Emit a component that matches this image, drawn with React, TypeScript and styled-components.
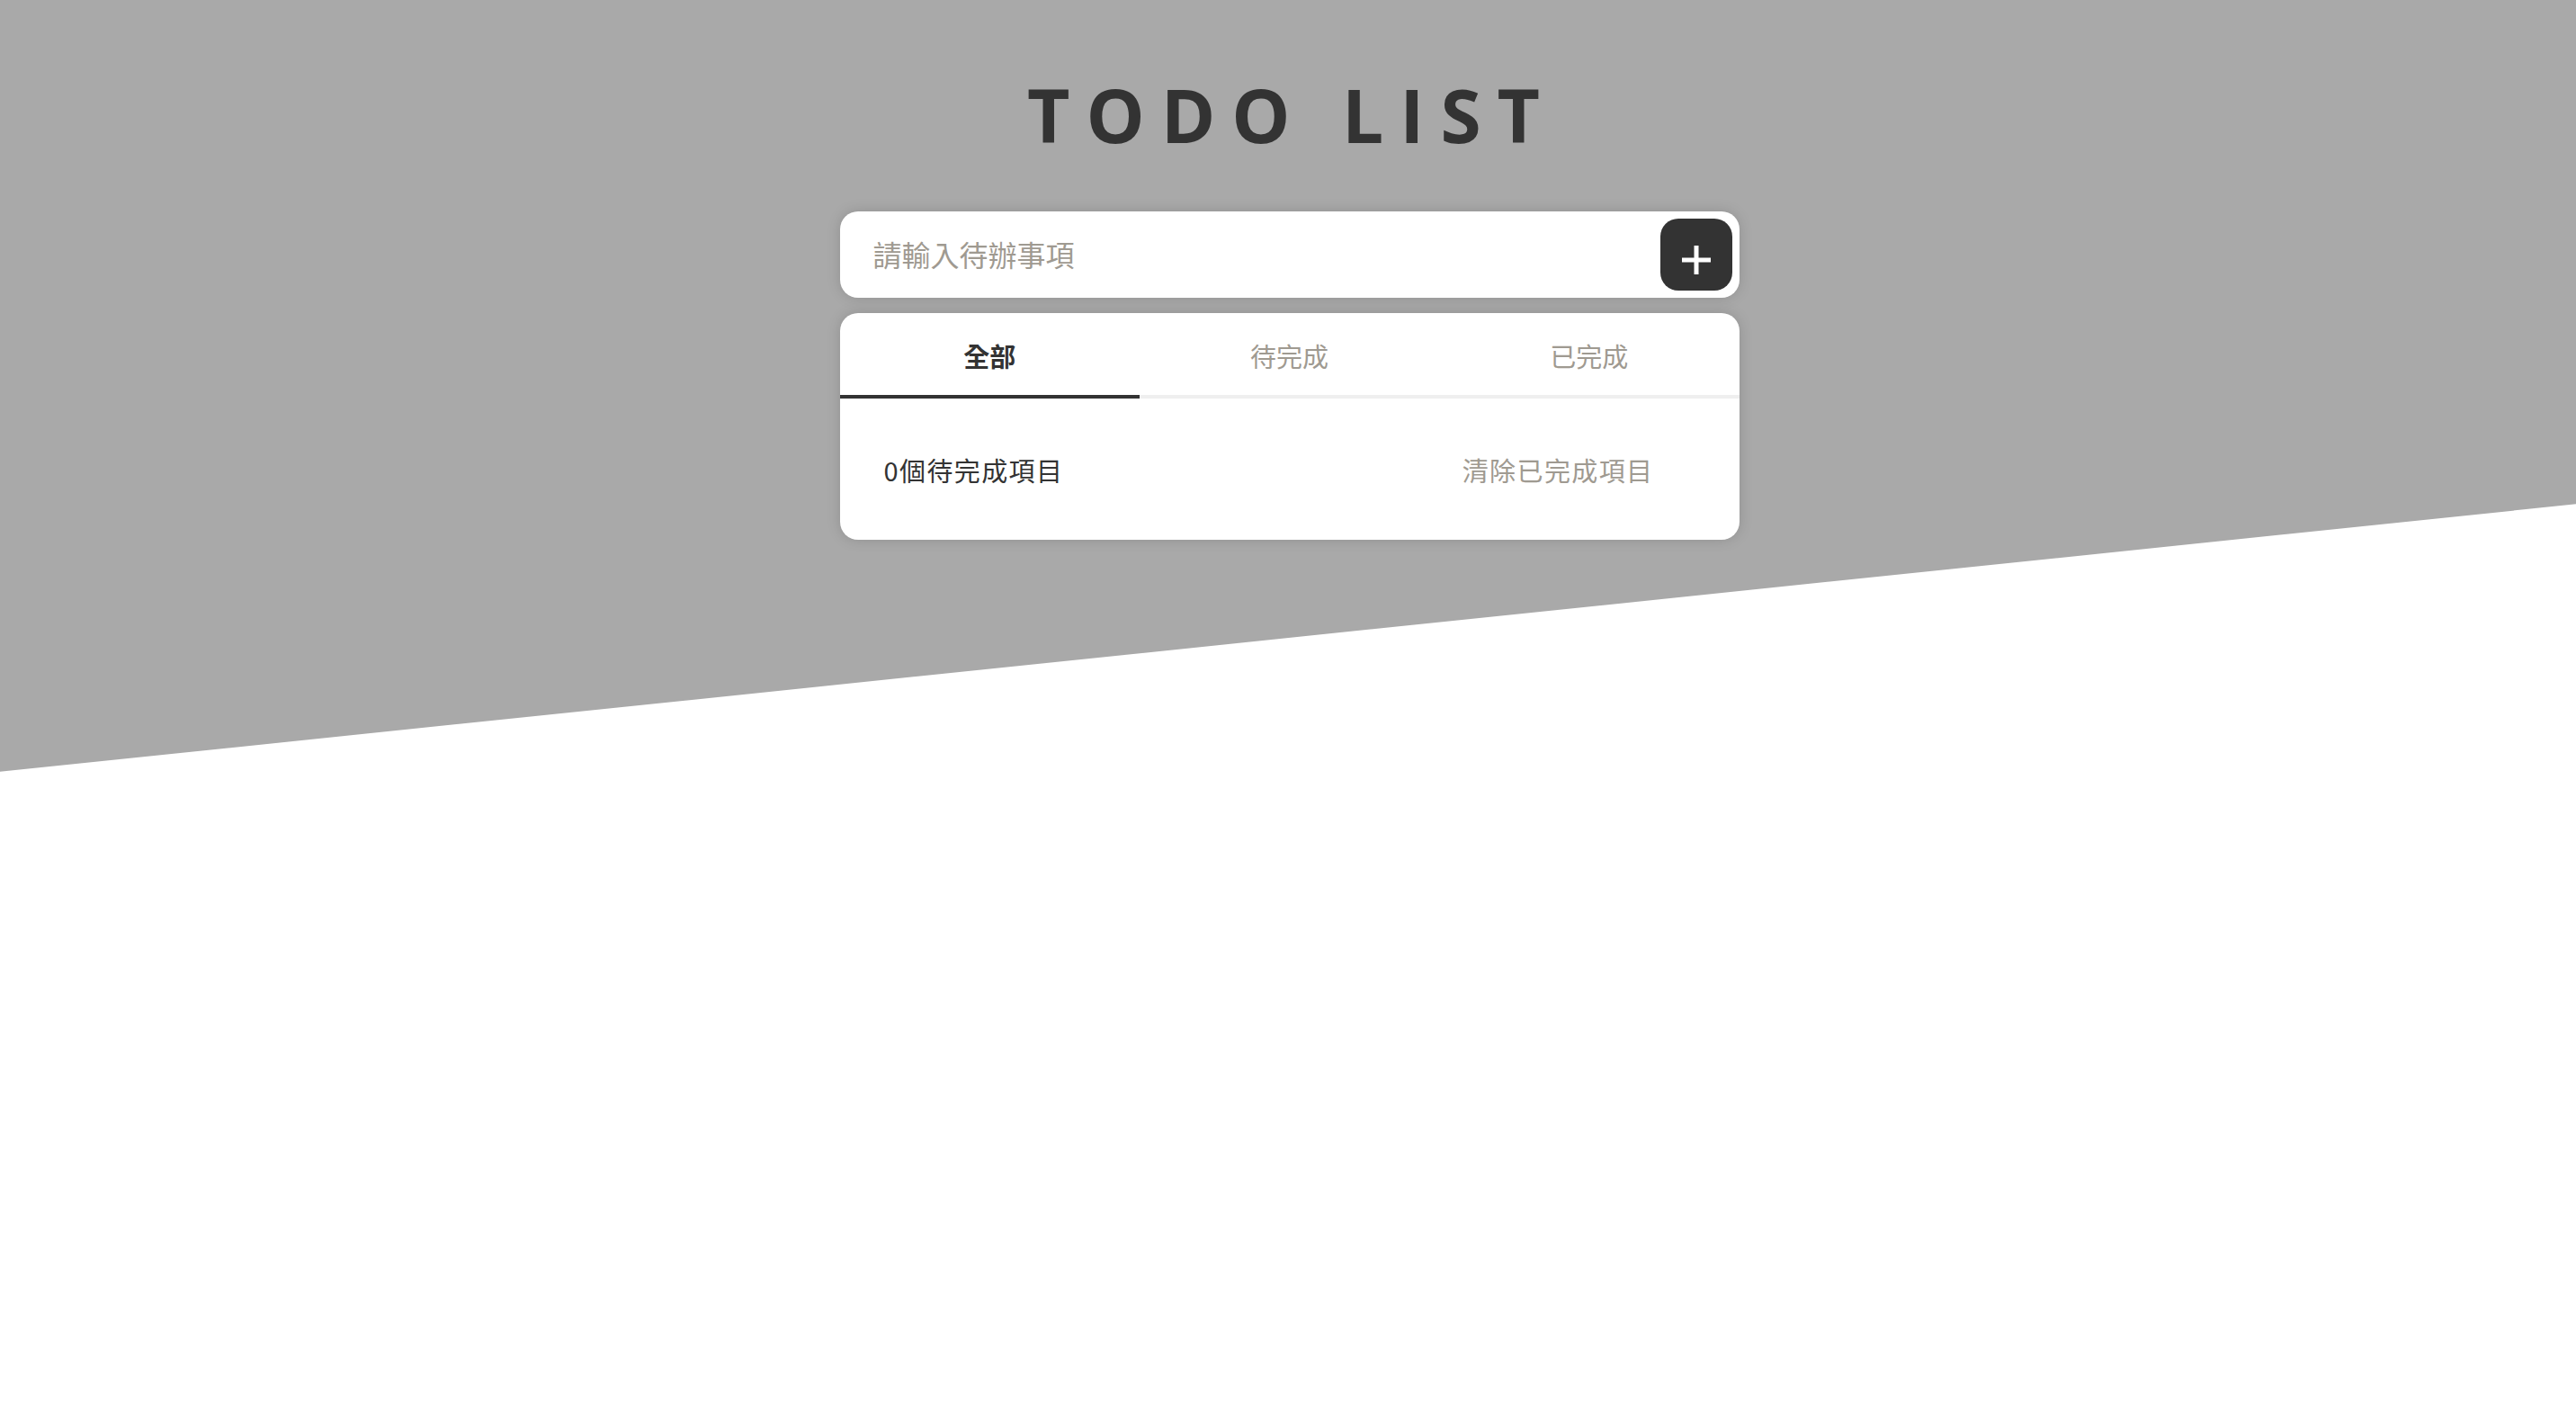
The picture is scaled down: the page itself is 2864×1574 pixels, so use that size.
import { useState } from 'react';
import styled, { createGlobalStyle } from 'styled-components';

const GlobalStyle = createGlobalStyle`
  * {
    box-sizing: border-box;
  }
  body {
    margin: 0;
    font-family: 'Noto Sans', 'Noto Sans CJK TC', sans-serif;
    color: #333333;
    background: #FFFFFF;
  }
`

const Page = styled.div`
  position: relative;
  min-height: 100vh;
  display: flex;
  flex-direction: column;
  align-items: center;
  padding-top: 66px;
  &::before {
    content: '';
    position: absolute;
    inset: 0;
    background: #A9A9A9;
    clip-path: polygon(0 0, 100% 0, 100% 35.6%, 0 54.5%);
    z-index: 0;
  }
`
const Title = styled.h1`
  position: relative;
  margin: 0 0 46px;
  padding-left: 8px;
  font-family: 'Open Sans', sans-serif;
  font-weight: 700;
  font-size: 82px;
  line-height: 1.5;
  letter-spacing: 18px;
  color: #333333;
`
const Wrapper = styled.div`
  position: relative;
  width: 1000px;
  margin-left: 3px;
  display: flex;
  flex-direction: column;
  gap: 17px;
`
const InputBar = styled.form`
  display: flex;
  align-items: center;
  height: 96px;
  padding: 8px 8px 8px 35px;
  background: #FFFFFF;
  border-radius: 20px;
  box-shadow: 0 0 15px rgba(0, 0, 0, 0.15);
`
const TodoInput = styled.input`
  flex: 1;
  border: none;
  outline: none;
  background: transparent;
  margin-bottom: 3px;
  font-family: 'Noto Sans CJK TC', sans-serif;
  font-size: 32px;
  color: #333333;
  &::placeholder {
    color: #9F9A91;
  }
`
const AddButton = styled.button`
  width: 80px;
  height: 80px;
  border: none;
  border-radius: 20px;
  background: #333333;
  display: flex;
  align-items: center;
  justify-content: center;
  padding: 12px 0 0;
  cursor: pointer;
`
const Card = styled.div`
  background: #FFFFFF;
  border-radius: 20px;
  box-shadow: 0 0 15px rgba(0, 0, 0, 0.15);
  overflow: hidden;
`
const Tabs = styled.ul`
  display: grid;
  grid-template-columns: repeat(3, 1fr);
  margin: 0;
  padding: 0;
  list-style: none;
`
const Tab = styled.li<{ active: boolean }>`
  height: 95px;
  display: flex;
  align-items: center;
  justify-content: center;
  padding-top: 2px;
  border-bottom: 4px solid ${({ active }) => active ? '#333333' : '#EFEFEF'};
  font-family: 'Noto Sans CJK TC', sans-serif;
  font-size: 29px;
  font-weight: ${({ active }) => active ? 700 : 400};
  color: ${({ active }) => active ? '#333333' : '#9F9A91'};
  cursor: pointer;
`
const Footer = styled.div`
  display: flex;
  justify-content: space-between;
  align-items: center;
  height: 157px;
  padding: 0 95px 0 49px;
  font-family: 'Noto Sans CJK TC', sans-serif;
  font-size: 29px;
  letter-spacing: 1.4px;
`
const Count = styled.span`
  color: #333333;
`
const ClearButton = styled.button`
  border: none;
  background: none;
  padding: 0;
  font: inherit;
  letter-spacing: inherit;
  color: #9F9A91;
  cursor: pointer;
`

const TABS = ['全部', '待完成', '已完成']

const App = () => {
  const [tab, setTab] = useState(0)
  const [value, setValue] = useState('')

  return (
    <>
      <GlobalStyle />
      <Page>
        <Title>TODO LIST</Title>
        <Wrapper>
          <InputBar onSubmit={(e) => e.preventDefault()}>
            <TodoInput
              placeholder="請輸入待辦事項"
              value={value}
              onChange={(e) => setValue(e.target.value)}
            />
            <AddButton type="submit" aria-label="add">
              <svg width="36" height="36" viewBox="0 0 36 36">
                <path d="M18 2v32M2 18h32" stroke="#FFFFFF" strokeWidth="5" />
              </svg>
            </AddButton>
          </InputBar>
          <Card>
            <Tabs>
              {TABS.map((label, i) => (
                <Tab key={label} active={tab === i} onClick={() => setTab(i)}>{label}</Tab>
              ))}
            </Tabs>
            <Footer>
              <Count>0個待完成項目</Count>
              <ClearButton>清除已完成項目</ClearButton>
            </Footer>
          </Card>
        </Wrapper>
      </Page>
    </>
  )
}

export default App;
